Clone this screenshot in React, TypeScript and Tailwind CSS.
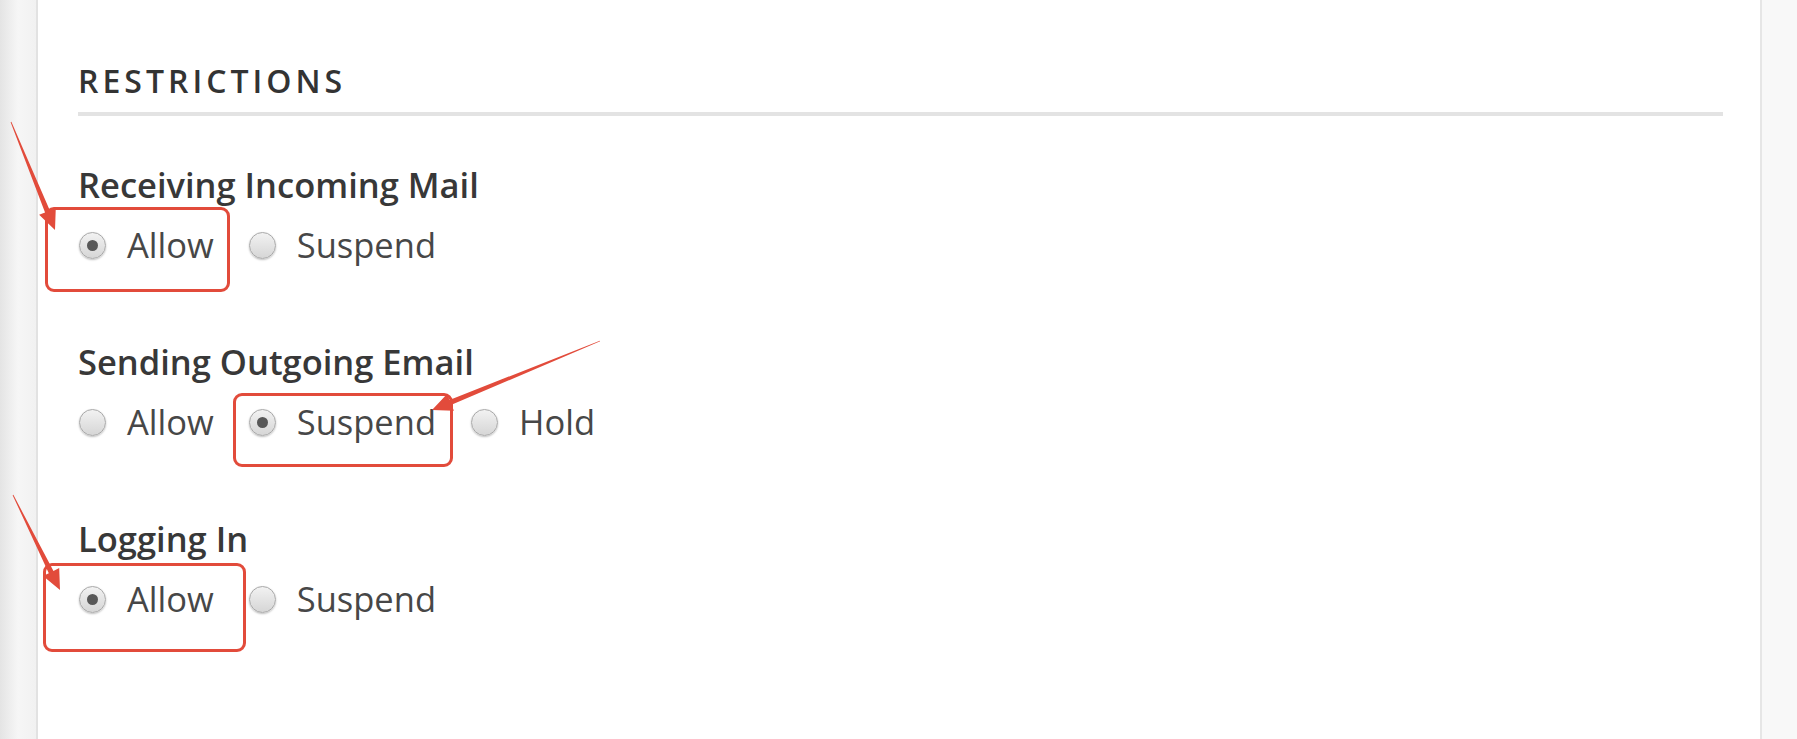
type Opt = { label: string; checked?: boolean };

const groups: { title: string; options: Opt[] }[] = [
  { title: "Receiving Incoming Mail", options: [{ label: "Allow", checked: true }, { label: "Suspend" }] },
  { title: "Sending Outgoing Email", options: [{ label: "Allow" }, { label: "Suspend", checked: true }, { label: "Hold" }] },
  { title: "Logging In", options: [{ label: "Allow", checked: true }, { label: "Suspend" }] },
];

function Radio({ checked }: { checked?: boolean }) {
  return (
    <span className="relative flex h-[27px] w-[27px] shrink-0 items-center justify-center rounded-full border border-[#a8a8a8] bg-gradient-to-b from-[#f2f2f2] to-[#d6d6d6] shadow-[0_1px_2px_rgba(0,0,0,0.25)]">
      {checked && <span className="h-[11px] w-[11px] rounded-full bg-[#585858]" />}
    </span>
  );
}

// tapered arrow: thin tail, fat head
function arrowPoints(tx: number, ty: number, px: number, py: number) {
  const len = Math.hypot(px - tx, py - ty);
  const dx = (px - tx) / len;
  const dy = (py - ty) / len;
  const nx = -dy;
  const ny = dx;
  const hl = 20;
  const hw = 9;
  const bx = px - dx * hl;
  const by = py - dy * hl;
  const pts = [
    [tx + nx * 0.4, ty + ny * 0.4],
    [bx + nx * 2.6, by + ny * 2.6],
    [bx + nx * hw, by + ny * hw],
    [px, py],
    [bx - nx * hw, by - ny * hw],
    [bx - nx * 2.6, by - ny * 2.6],
    [tx - nx * 0.4, ty - ny * 0.4],
  ];
  return pts.map((p) => p.join(",")).join(" ");
}

export default function App() {
  return (
    <div className="relative flex h-[739px] w-full overflow-hidden bg-white font-['Open_Sans',sans-serif]">
      {/* left gutter */}
      <div className="w-[38px] shrink-0 border-r-2 border-[#e2e2e2] bg-gradient-to-r from-[#e4e4e4] via-[#f6f6f6] to-[#f1f1f1]" />

      {/* panel */}
      <div className="flex flex-1 flex-col pl-[40px] pr-[37px] pt-[61px]">
        <h2 className="border-b-4 border-[#e3e3e3] pb-[11px] text-[32px] font-semibold uppercase leading-[40px] tracking-[4px] text-[#333]">
          Restrictions
        </h2>

        <div className="mt-[49px] flex flex-col gap-[77px]">
          {groups.map((g) => (
            <div key={g.title} className="flex flex-col gap-[20px]">
              <div className="text-[34.5px] font-semibold leading-[40px] text-[#383838]">{g.title}</div>
              <div className="flex items-center gap-[35px] pl-px">
                {g.options.map((o) => (
                  <label key={o.label} className="flex h-[40px] items-center gap-[21px] text-[34.5px] leading-[40px] text-[#474747]">
                    <Radio checked={o.checked} />
                    {o.label}
                  </label>
                ))}
              </div>
            </div>
          ))}
        </div>
      </div>

      {/* right gutter */}
      <div className="w-[37px] shrink-0 border-l-2 border-[#e6e6e6] bg-[#f8f8f8]" />

      {/* annotations */}
      <div className="absolute left-[45px] top-[207px] h-[85px] w-[185px] rounded-[9px] border-[3px] border-[#e24b3b]" />
      <div className="absolute left-[233px] top-[393px] h-[74px] w-[220px] rounded-[9px] border-[3px] border-[#e24b3b]" />
      <div className="absolute left-[43px] top-[563px] h-[89px] w-[203px] rounded-[9px] border-[3px] border-[#e24b3b]" />
      <svg className="pointer-events-none absolute inset-0" width="1797" height="739">
        <polygon points={arrowPoints(11, 122, 55, 230)} fill="#e24b3b" />
        <polygon points={arrowPoints(600, 341, 432, 410)} fill="#e24b3b" />
        <polygon points={arrowPoints(13, 495, 60, 590)} fill="#e24b3b" />
      </svg>
    </div>
  );
}
